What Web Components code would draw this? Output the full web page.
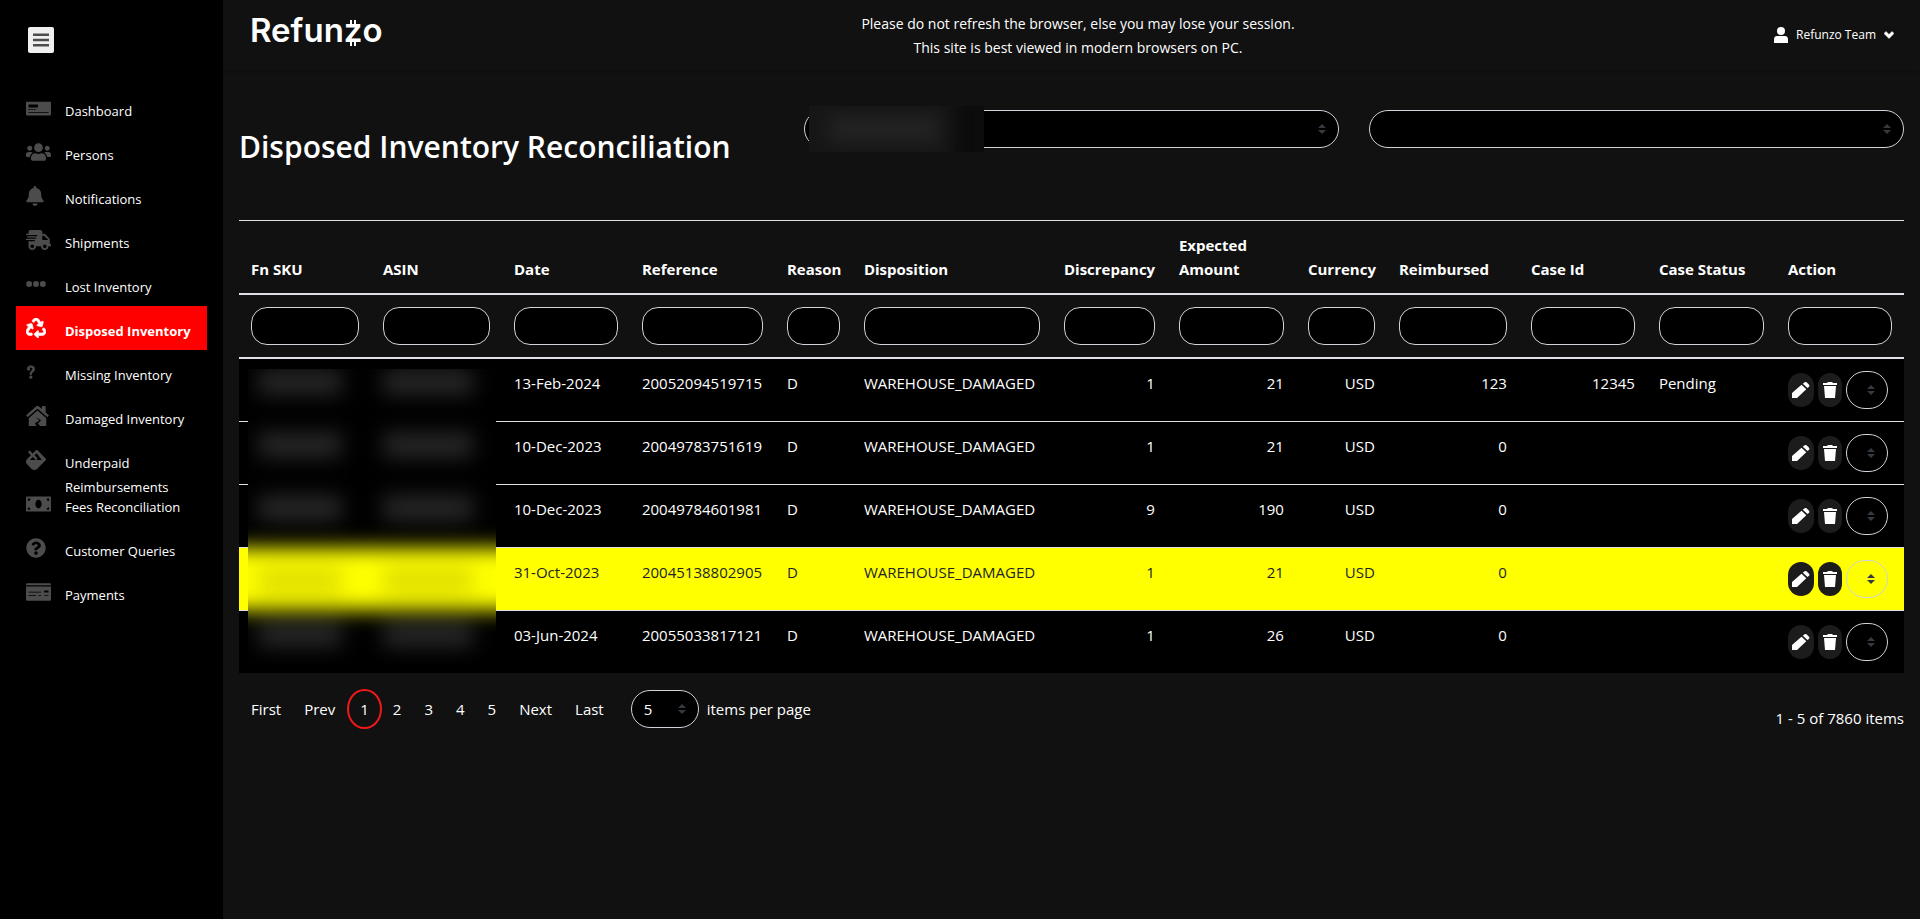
<!DOCTYPE html>
<html lang="en">
<head>
<meta charset="utf-8">
<title>Refunzo - Disposed Inventory Reconciliation</title>
<style>
    body {
        margin: 0;
        background-color: #111;
        color: #fff;
        font-family: "Open Sans", "Noto Sans", sans-serif;
        font-size: 15px;
        line-height: 24px;
    }
</style>
</head>
<body>
<refunzo-app>
    <side-menu slot="menu"></side-menu>
    <top-bar slot="top">
        <span>Please do not refresh the browser, else you may lose your session.</span>
        <span>This site is best viewed in modern browsers on PC.</span>
    </top-bar>
    <page-title>Disposed Inventory Reconciliation</page-title>
    <inventory-table></inventory-table>
    <table-pager></table-pager>
</refunzo-app>

<script>
    const ICONS = {
        check: ['0 0 640 512', '<path fill-rule="evenodd" d="M16 96h608a16 16 0 0 1 16 16v304a32 32 0 0 1-32 32H32a32 32 0 0 1-32-32V112a16 16 0 0 1 16-16zM64 168v76h240v-76zM64 284v24h40v-24zM132 284v24h40v-24zM200 284v24h40v-24zM64 366v18h512v-18z"/>'],
        users: ['0 0 640 512', '<path d="M96 224c35.3 0 64-28.7 64-64s-28.7-64-64-64-64 28.7-64 64 28.7 64 64 64zm448 0c35.3 0 64-28.7 64-64s-28.7-64-64-64-64 28.7-64 64 28.7 64 64 64zm32 32h-64c-17.6 0-33.5 7.1-45.1 18.6 40.3 22.1 68.9 62 75.1 109.4h66c17.7 0 32-14.3 32-32v-32c0-35.3-28.7-64-64-64zm-256 0c61.9 0 112-50.1 112-112S381.9 32 320 32 208 82.1 208 144s50.1 112 112 112zm76.8 32h-8.3c-20.8 10-43.9 16-68.5 16s-47.6-6-68.5-16h-8.3C179.6 288 128 339.6 128 403.2V432c0 26.5 21.5 48 48 48h288c26.5 0 48-21.5 48-48v-28.8c0-63.6-51.6-115.2-115.2-115.2zm-223.7-13.4C161.5 263.1 145.6 256 128 256H64c-35.3 0-64 28.7-64 64v32c0 17.7 14.3 32 32 32h65.9c6.3-47.4 34.9-87.3 75.2-109.4z"/>'],
        bell: ['0 0 448 512', '<path d="M224 512c35.32 0 63.97-28.65 63.97-64H160.03c0 35.35 28.65 64 63.97 64zm215.39-149.71c-19.32-20.76-55.47-51.99-55.47-154.29 0-77.7-54.48-139.9-127.94-155.16V32c0-17.67-14.32-32-31.98-32s-31.98 14.33-31.98 32v20.84C118.56 68.1 64.08 130.3 64.08 208c0 102.3-36.15 133.53-55.47 154.29-6 6.45-8.66 14.16-8.61 21.71.11 16.4 12.98 32 32.1 32h383.8c19.12 0 32-15.6 32.1-32 .05-7.55-2.61-15.27-8.61-21.71z"/>'],
        truck: ['0 0 640 512', '<path d="M624 352h-16V243.9c0-12.7-5.1-24.9-14.1-33.9L494 110.1c-9-9-21.2-14.1-33.9-14.1H416V48c0-26.5-21.5-48-48-48H112C85.5 0 64 21.5 64 48v48H8c-4.4 0-8 3.6-8 8v16c0 4.4 3.6 8 8 8h272c4.4 0 8 3.6 8 8v16c0 4.4-3.6 8-8 8H40c-4.4 0-8 3.6-8 8v16c0 4.4 3.6 8 8 8h208c4.4 0 8 3.6 8 8v16c0 4.4-3.6 8-8 8H8c-4.4 0-8 3.6-8 8v16c0 4.4 3.6 8 8 8h208c4.4 0 8 3.6 8 8v16c0 4.4-3.6 8-8 8H64v128c0 53 43 96 96 96s96-43 96-96h128c0 53 43 96 96 96s96-43 96-96h48c8.8 0 16-7.2 16-16v-32c0-8.8-7.2-16-16-16zM160 464c-26.5 0-48-21.5-48-48s21.5-48 48-48 48 21.5 48 48-21.5 48-48 48zm320 0c-26.5 0-48-21.5-48-48s21.5-48 48-48 48 21.5 48 48-21.5 48-48 48zm80-208H416V144h44.1l99.9 99.9V256z"/>'],
        dots: ['0 0 512 512', '<circle cx="80" cy="256" r="76"/><circle cx="256" cy="256" r="76"/><circle cx="432" cy="256" r="76"/>'],
        recycle: ['0 0 512 512', '<path d="M184.561 261.903c3.232 13.997-12.123 24.635-24.068 17.168l-40.736-25.455-50.867 81.402C55.606 356.273 70.96 384 96.012 384H148c6.627 0 12 5.373 12 12v40c0 6.627-5.373 12-12 12H96.115c-75.334 0-121.302-83.048-81.408-146.88l50.822-81.388-40.725-25.448c-12.081-7.547-8.966-25.961 4.879-29.158l110.237-25.45c8.611-1.988 17.201 3.381 19.189 11.99l25.452 110.237zm98.561-182.915l41.289 66.076-40.74 25.457c-12.051 7.528-9 25.953 4.879 29.158l110.237 25.45c8.672 1.999 17.215-3.438 19.189-11.99l25.45-110.237c3.197-13.844-11.99-24.719-24.068-17.168l-40.687 25.424-41.263-66.082c-37.521-60.033-125.209-60.171-162.816 0l-17.963 28.766c-3.51 5.62-1.8 13.021 3.82 16.533l33.919 21.195c5.62 3.512 13.024 1.803 16.536-3.817l17.961-28.743c12.712-20.341 41.973-19.676 54.257-.022zM497.288 301.12l-27.515-44.065c-3.511-5.623-10.916-7.334-16.538-3.821l-33.861 21.159c-5.62 3.512-7.33 10.915-3.818 16.536l27.564 44.112c13.257 21.211-2.057 48.96-27.136 48.96H320V336.02c0-14.213-17.242-21.383-27.313-11.313l-80 79.981c-6.249 6.248-6.249 16.379 0 22.627l80 79.989C302.689 517.308 320 510.3 320 495.989V448h95.88c75.274 0 121.335-82.997 81.408-146.88z" stroke="currentColor" stroke-width="16"/>'],
        question: ['0 0 256 512', '<path stroke="currentColor" stroke-width="16" d="M30 175c5-50 40-79 94-79 58 0 100 32 100 82 0 38-22 58-48 78-24 18-32 30-32 56v12h-42v-14c0-42 16-62 42-84 18-15 26-27 26-46 0-28-20-46-48-46-22 0-34 9-34 19 0 12 13 14 13 32 0 16-14 27-33 27-22 0-40-14-38-37z"/><circle cx="124" cy="388" r="40"/>'],
        house: ['0 0 576 512', '<path d="M288 115L69 308c-1 1-3 1-5 2v186c0 9 7 16 16 16h182l-38-68 112-76-96-84 120 68c14 8 15 22 6 34l-70 62 62 64h138c9 0 16-7 16-16V310c-1-1-3-1-4-2zM570 230l-74-66V16c0-9-7-16-16-16h-64c-9 0-16 7-16 16v63l-80-71c-22-20-42-20-64 0L6 230c-8 6-8 16-2 23l22 24c6 7 16 7 22 1L278 76c7-6 13-6 20 0l230 202c7 6 17 6 23-1l21-24c6-7 6-17-2-23z"/>'],
        fill: ['0 0 512 512', '<path fill-rule="evenodd" d="M503 217L295 9c-12-12-32-12-44 0l-80 80-67-67c-6-6-16-6-22 0L59 45c-6 6-6 16 0 22l67 67L28 231c-37 37-37 98 0 136l117 117c38 37 99 37 136 0l222-222c13-12 13-32 0-45zM404 256H96l79-76 62 62c12 12 32 12 44 0s12-32 0-44l-62-62 55-52z"/>'],
        bill: ['0 0 640 512', '<path fill-rule="evenodd" d="M16 64h608a16 16 0 0 1 16 16v352a16 16 0 0 1-16 16H16a16 16 0 0 1-16-16V80a16 16 0 0 1 16-16zM48 112v64a64 64 0 0 0 64-64zM528 112a64 64 0 0 0 64 64v-64zM48 336v64h64a64 64 0 0 0-64-64zM592 336a64 64 0 0 0-64 64h64zM320 144c-46 0-80 50-80 112s34 112 80 112 80-50 80-112-34-112-80-112z"/>'],
        help: ['0 0 512 512', '<path d="M504 256c0 136.997-111.043 248-248 248S8 392.997 8 256C8 119.083 119.043 8 256 8s248 111.083 248 248zM262.655 90c-54.497 0-89.255 22.957-116.549 63.758-3.536 5.286-2.353 12.415 2.715 16.258l34.699 26.31c5.205 3.947 12.621 3.008 16.665-2.122 17.864-22.658 30.113-35.797 57.303-35.797 20.429 0 45.698 13.148 45.698 32.958 0 14.976-12.363 22.667-32.534 33.976C247.128 238.528 216 254.941 216 296v4c0 6.627 5.373 12 12 12h56c6.627 0 12-5.373 12-12v-1.333c0-28.462 83.186-29.647 83.186-106.667 0-58.002-60.165-102-116.531-102zM256 338c-25.365 0-46 20.635-46 46 0 25.364 20.635 46 46 46s46-20.636 46-46c0-25.365-20.635-46-46-46z"/>'],
        card: ['0 0 640 512', '<path fill-rule="evenodd" d="M24 32h592a24 24 0 0 1 24 24v28H0V56a24 24 0 0 1 24-24zM0 112h640v344a24 24 0 0 1-24 24H24a24 24 0 0 1-24-24zM64 248v22h320v-22zM64 336v22h192v-22zM464 216v54h112v-54zM464 336v22h112v-22zM320 336v22h64v-22z"/>'],
        bars: ['0 0 16 14', '<path d="M0 .5h16v2.500H0zM0 5.750h16v2.500H0zM0 11h16v2.500H0z"/>'],
        user: ['0 0 14 16', '<ellipse cx="7" cy="4" rx="4" ry="4"/><path d="M0 16v-3c0-3 1-4 3-4h8c2 0 3 1 3 4v3z"/>'],
        chevron: ['0 0 10 8', '<path d="M0 2.500 2 .5l3 3 3-3 2 2-5 5z" stroke="currentColor" stroke-width=".5"/>'],
        pencil: ['0 0 18 16', '<path d="M0 16v-5L9.500 2.700l4.800 4.600L5 16zM10.800 1.700 12.300.5c.8-.7 1.700-.7 2.500 0l2 1.900c.8.8.8 1.700 0 2.500l-1.300 1.200z"/>'],
        trash: ['0 0 14 16', '<path d="M0 1h4l1-1h4l1 1h4v2H0zM1 4h12l-1 12H2z"/>']
    };

    function icon(name, height) {
        const [box, body] = ICONS[name];
        const [, , w, h] = box.split(' ');
        const width = Math.round(height * w / h);
        return `<svg viewBox="${box}" width="${width}" height="${height}" fill="currentColor" aria-hidden="true">${body}</svg>`;
    }

    // shared look of the rounded drop-downs
    const SELECT_CSS = `
        select {
            appearance: none;
            box-sizing: border-box;
            height: 38px;
            margin: 0;
            padding: 0 28px 0 12px;
            border: 1px solid #ced4da;
            border-radius: 20px;
            background: #000 url("data:image/svg+xml,%3csvg xmlns='http://www.w3.org/2000/svg' viewBox='0 0 4 5'%3e%3cpath fill='%23343a40' d='M2 0L0 2h4zm0 5L0 3h4z'/%3e%3c/svg%3e") no-repeat right 12px center / 8px 10px;
            color: #fff;
            font: inherit;
        }
    `;

    class RefunzoApp extends HTMLElement {
        constructor() {
            super();
            this.attachShadow({ mode: 'open' });
            this.shadowRoot.innerHTML = `
                <style>
                    :host {
                        display: grid;
                        grid-template-columns: 223px minmax(0, 1fr);
                        min-height: 100vh;
                    }

                    main {
                        padding: 0 16px;
                    }
                </style>
                <slot name="menu"></slot>
                <div>
                    <slot name="top"></slot>
                    <main><slot></slot></main>
                </div>
            `;
        }
    }

    class SideMenu extends HTMLElement {
        constructor() {
            super();
            this.attachShadow({ mode: 'open' });
            this.shadowRoot.innerHTML = `
                <style>
                    :host {
                        display: block;
                        background-color: #000;
                        font-size: 13px;
                    }

                    button {
                        display: flex;
                        align-items: center;
                        justify-content: center;
                        width: 26px;
                        height: 26px;
                        margin: 27px 0 33px 28px;
                        padding: 0;
                        border: 0;
                        border-radius: 2px;
                        background-color: #f0f0f0;
                        color: #000;
                    }

                    ul {
                        list-style: none;
                        margin: 0;
                        padding: 0 16px;
                    }

                    a {
                        display: grid;
                        grid-template-columns: 39px 1fr;
                        box-sizing: border-box;
                        height: 44px;
                        padding: 12px 10px 0;
                        color: #fff;
                        text-decoration: none;
                    }

                    a.active {
                        background-color: #f00;
                        font-weight: 700;
                    }

                    span {
                        padding-top: 1px;
                    }

                    svg {
                        color: #4c4c4c;
                    }

                    a.active svg {
                        color: #fff;
                    }
                </style>
                <button type="button" aria-label="Toggle menu">${icon('bars', 14)}</button>
                <nav><ul></ul></nav>
            `;
        }

        connectedCallback() {
            const items = [
                ['check', 'Dashboard'],
                ['users', 'Persons'],
                ['bell', 'Notifications'],
                ['truck', 'Shipments'],
                ['dots', 'Lost Inventory'],
                ['recycle', 'Disposed Inventory'],
                ['question', 'Missing Inventory'],
                ['house', 'Damaged Inventory'],
                ['fill', 'Underpaid Reimbursements'],
                ['bill', 'Fees Reconciliation'],
                ['help', 'Customer Queries'],
                ['card', 'Payments']
            ];
            this.shadowRoot.querySelector('ul').innerHTML = items.map(([name, label]) => `
                <li><a href="#"${label === 'Disposed Inventory' ? ' class="active" aria-current="page"' : ''}>${icon(name, 20)}<span>${label}</span></a></li>
            `).join('');
        }
    }

    class TopBar extends HTMLElement {
        constructor() {
            super();
            this.attachShadow({ mode: 'open' });
            this.shadowRoot.innerHTML = `
                <style>
                    :host {
                        display: grid;
                        grid-template-columns: 1fr auto 1fr;
                        align-items: start;
                        box-sizing: border-box;
                        height: 70px;
                        padding: 12px 26px 0 27px;
                        box-shadow: 0 1px 4px rgba(0, 0, 0, .2);
                        font-size: 14px;
                    }

                    .logo {
                        justify-self: start;
                        color: #fff;
                        font: 600 33px/36px Inter, sans-serif;
                        text-decoration: none;
                    }

                    .z {
                        position: relative;
                    }

                    /* the two short double bars of the coin sign */
                    .z::before,
                    .z::after {
                        content: "";
                        position: absolute;
                        left: 6px;
                        width: 2px;
                        height: 4px;
                        border: solid #fff;
                        border-width: 0 2px;
                    }

                    .z::before {
                        top: 10px;
                    }

                    .z::after {
                        bottom: 4px;
                    }

                    .notice {
                        display: flex;
                        flex-direction: column;
                        align-items: center;
                        padding-left: 12px;
                    }

                    button {
                        display: flex;
                        align-items: center;
                        gap: 8px;
                        justify-self: end;
                        padding: 11px 0 0;
                        border: 0;
                        background: none;
                        color: #fff;
                        font: inherit;
                        font-size: 12px;
                    }
                </style>
                <a class="logo" href="#">Refun<span class="z">z</span>o</a>
                <div class="notice"><slot></slot></div>
                <button type="button">${icon('user', 16)}<span>Refunzo Team</span>${icon('chevron', 8)}</button>
            `;
        }
    }

    class PageTitle extends HTMLElement {
        constructor() {
            super();
            this.attachShadow({ mode: 'open' });
            this.shadowRoot.innerHTML = `
                <style>
                    :host {
                        display: grid;
                        grid-template-columns: repeat(3, 1fr);
                        column-gap: 30px;
                        padding: 40px 0 54px;
                    }

                    h1 {
                        margin: 18px 0 0;
                        font-size: 30px;
                        font-weight: 600;
                        line-height: 38px;
                        white-space: nowrap;
                    }

                    .field {
                        position: relative;
                    }

                    ${SELECT_CSS}

                    select {
                        width: 100%;
                    }

                    /* the seller name stays hidden behind a blurred patch */
                    .mask {
                        position: absolute;
                        left: 5px;
                        top: -4px;
                        width: 175px;
                        height: 46px;
                        overflow: hidden;
                        background-color: #0c0c0c;
                    }

                    .mask::before {
                        content: "";
                        position: absolute;
                        inset: -20px 30px -20px -20px;
                        background:
                            linear-gradient(#222, #222) 40px 30px / 110px 26px no-repeat,
                            #161616;
                        filter: blur(8px);
                    }
                </style>
                <h1><slot></slot></h1>
                <div class="field">
                    <select aria-label="Seller"><option></option></select>
                    <div class="mask"></div>
                </div>
                <div class="field">
                    <select aria-label="Marketplace"><option></option></select>
                </div>
            `;
        }
    }

    class InventoryTable extends HTMLElement {
        constructor() {
            super();
            this.attachShadow({ mode: 'open' });
            this.shadowRoot.innerHTML = `
                <style>
                    :host {
                        display: block;
                        position: relative;
                    }

                    table {
                        width: 100%;
                        table-layout: fixed;
                        border-spacing: 0;
                    }

                    th,
                    td {
                        padding: 12px;
                        text-align: left;
                        vertical-align: top;
                    }

                    thead th,
                    thead td {
                        border-bottom: 2px solid #dee2e6;
                    }

                    thead th {
                        border-top: 1px solid #dee2e6;
                        font-weight: 700;
                        vertical-align: bottom;
                    }

                    thead input {
                        display: block;
                        box-sizing: border-box;
                        width: 100%;
                        height: 38px;
                        padding: 0 12px;
                        border: 1px solid #ced4da;
                        border-radius: 16px;
                        background-color: #000;
                        color: #fff;
                        font: inherit;
                    }

                    tbody td {
                        background-color: #000;
                    }

                    tbody tr + tr td {
                        border-top: 1px solid #dee2e6;
                    }

                    tbody tr.marked td {
                        background-color: #ff0;
                        color: #212529;
                    }

                    .num {
                        text-align: right;
                    }

                    .actions {
                        display: flex;
                        align-items: center;
                        gap: 4px;
                    }

                    button {
                        display: flex;
                        align-items: center;
                        justify-content: center;
                        width: 26px;
                        height: 34px;
                        padding: 0;
                        border: 0;
                        border-radius: 13px;
                        background-color: #1c1c1c;
                        color: #fff;
                    }

                    button + button {
                        width: 24px;
                    }

                    ${SELECT_CSS}

                    .actions select {
                        width: 42px;
                        background-color: transparent;
                    }

                    /* SKU and ASIN columns are covered by one blurred patch */
                    .mask {
                        position: absolute;
                        left: 9px;
                        bottom: 8px;
                        width: 248px;
                        height: 296px;
                        overflow: hidden;
                    }

                    .mask::before {
                        content: "";
                        position: absolute;
                        inset: -30px;
                        background:
                            linear-gradient(rgba(0, 0, 0, .12), rgba(0, 0, 0, .12)) 40px 228px / 84px 28px no-repeat,
                            linear-gradient(rgba(0, 0, 0, .12), rgba(0, 0, 0, .12)) 165px 228px / 90px 28px no-repeat,
                            linear-gradient(#ff0, #ff0) 0 209px / 100% 62px no-repeat,
                            linear-gradient(#262626 26px, transparent 26px) 40px 30px / 84px 63px repeat-y,
                            linear-gradient(#262626 26px, transparent 26px) 165px 30px / 90px 63px repeat-y,
                            #000;
                        filter: blur(10px);
                    }
                </style>
                <table>
                    <colgroup></colgroup>
                    <thead>
                        <tr class="heads"></tr>
                        <tr class="filters"></tr>
                    </thead>
                    <tbody></tbody>
                </table>
                <div class="mask"></div>
            `;
        }

        connectedCallback() {
            // title, relative width, right aligned
            const columns = [
                ['Fn SKU', 132],
                ['ASIN', 131],
                ['Date', 128],
                ['Reference', 145],
                ['Reason', 77],
                ['Disposition', 200],
                ['Discrepancy', 115, true],
                ['Expected Amount', 129, true],
                ['Currency', 91, true],
                ['Reimbursed', 132, true],
                ['Case Id', 128, true],
                ['Case Status', 129],
                ['Action', 128]
            ];
            const rows = [
                ['', '', '13-Feb-2024', '20052094519715', 'D', 'WAREHOUSE_DAMAGED', '1', '21', 'USD', '123', '12345', 'Pending'],
                ['', '', '10-Dec-2023', '20049783751619', 'D', 'WAREHOUSE_DAMAGED', '1', '21', 'USD', '0', '', ''],
                ['', '', '10-Dec-2023', '20049784601981', 'D', 'WAREHOUSE_DAMAGED', '9', '190', 'USD', '0', '', ''],
                ['', '', '31-Oct-2023', '20045138802905', 'D', 'WAREHOUSE_DAMAGED', '1', '21', 'USD', '0', '', ''],
                ['', '', '03-Jun-2024', '20055033817121', 'D', 'WAREHOUSE_DAMAGED', '1', '26', 'USD', '0', '', '']
            ];
            const root = this.shadowRoot;
            const total = columns.reduce((sum, column) => sum + column[1], 0);

            root.querySelector('colgroup').innerHTML = columns.map(([, width]) => `<col style="width: ${width / total * 100}%">`).join('');
            root.querySelector('.heads').innerHTML = columns.map(([title]) => `<th scope="col">${title}</th>`).join('');
            root.querySelector('.filters').innerHTML = columns.map(([title]) => `<td><input type="text" aria-label="Filter ${title}"></td>`).join('');
            root.querySelector('tbody').innerHTML = rows.map((row, i) => `
                <tr${i === 3 ? ' class="marked"' : ''}>
                    ${row.map((text, j) => `<td${columns[j][2] ? ' class="num"' : ''}>${text}</td>`).join('')}
                    <td>
                        <div class="actions">
                            <button type="button" aria-label="Edit">${icon('pencil', 16)}</button>
                            <button type="button" aria-label="Delete">${icon('trash', 16)}</button>
                            <select aria-label="More"><option></option></select>
                        </div>
                    </td>
                </tr>
            `).join('');
        }
    }

    class TablePager extends HTMLElement {
        constructor() {
            super();
            this.attachShadow({ mode: 'open' });
            this.shadowRoot.innerHTML = `
                <style>
                    :host {
                        display: flex;
                        align-items: center;
                        padding-top: 15px;
                    }

                    nav {
                        display: flex;
                        align-items: center;
                    }

                    a {
                        padding: 0 12px 0 11px;
                        color: #fff;
                        text-decoration: none;
                    }

                    a:first-child {
                        padding-left: 12px;
                    }

                    a.current {
                        padding: 6px 11px;
                        border: 2px solid #f01818;
                        border-radius: 50%;
                    }

                    label {
                        display: flex;
                        align-items: center;
                        gap: 8px;
                        margin-left: 15px;
                    }

                    ${SELECT_CSS}

                    select {
                        width: 68px;
                    }

                    .count {
                        margin-left: auto;
                        padding-top: 18px;
                    }
                </style>
                <nav aria-label="Pages">
                    <a href="#">First</a>
                    <a href="#">Prev</a>
                    <a href="#" class="current" aria-current="page">1</a>
                    <a href="#">2</a>
                    <a href="#">3</a>
                    <a href="#">4</a>
                    <a href="#">5</a>
                    <a href="#">Next</a>
                    <a href="#">Last</a>
                </nav>
                <label><select><option>5</option></select>items per page</label>
                <span class="count">1 - 5 of 7860 items</span>
            `;
        }
    }

    customElements.define('refunzo-app', RefunzoApp);
    customElements.define('side-menu', SideMenu);
    customElements.define('top-bar', TopBar);
    customElements.define('page-title', PageTitle);
    customElements.define('inventory-table', InventoryTable);
    customElements.define('table-pager', TablePager);
</script>
</body>
</html>
